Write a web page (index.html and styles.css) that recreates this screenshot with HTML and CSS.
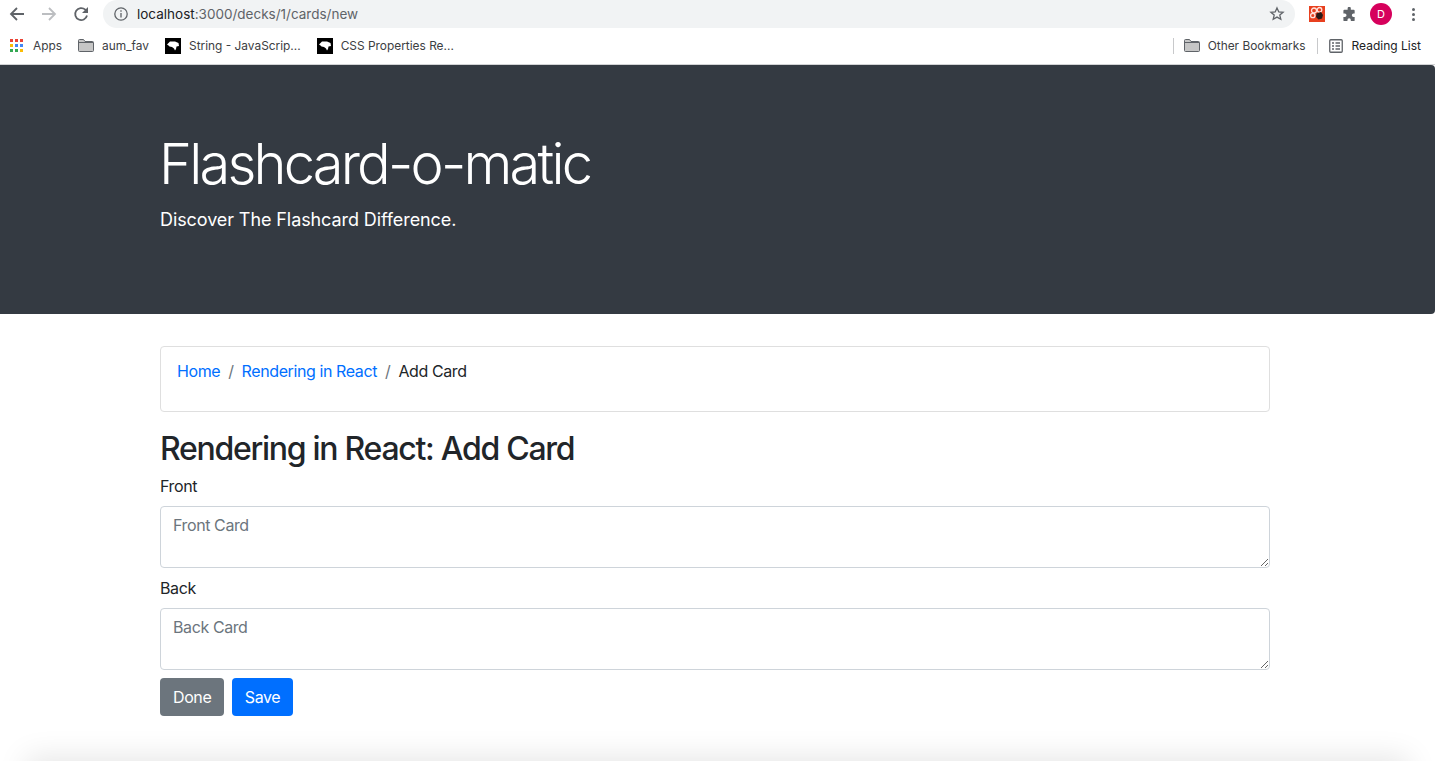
FILE: index.html
```html
<!DOCTYPE html>
<html lang="en">
<head>
<meta charset="utf-8">
<title>Flashcard-o-matic</title>
<link rel="stylesheet" href="styles.css">
</head>
<body>
<header class="chrome">
  <div class="toolbar">
    <svg class="nav-icon first" viewBox="0 0 16 16"><path d="M15 8H2M8 2 2 8l6 6" class="stroke-dark"/></svg>
    <svg class="nav-icon" viewBox="0 0 16 16"><path d="M1 8h13M8 2l6 6-6 6" class="stroke-light"/></svg>
    <svg class="nav-icon" viewBox="0 0 16 16"><path d="M14 9.500A6 6 0 1 1 12.300 3.700L14 5.500" class="stroke-dark"/><path d="M15 1v6H9z" class="fill-dark"/></svg>
    <div class="omnibox">
      <svg class="info" viewBox="0 0 14 14"><circle cx="7" cy="7" r="6.200" class="stroke-thin"/><path d="M7 6v4.500M7 3.300v1.500" class="stroke-thin"/></svg>
      <span class="url"><span class="host">localhost</span>:3000/decks/1/cards/new</span>
      <svg class="star" viewBox="0 0 16 16"><path d="m8 1.900 1.800 4 4.300.4-3.300 2.800 1 4.200L8 11.100l-3.800 2.200 1-4.200-3.300-2.800 4.300-.4z" class="stroke-thin"/></svg>
    </div>
    <svg class="ext" viewBox="0 0 16 16"><rect width="16" height="16" fill="#e8401f"/><g fill="none" stroke="#ffe3dc" stroke-width="1.300"><circle cx="5" cy="4.500" r="2.500"/><circle cx="10.500" cy="3.800" r="2.300"/><circle cx="3.800" cy="9.500" r="2.200"/><path d="M7.500 4.500h1M5 7v1"/></g><path d="M7.500 7.500 12 6l2 3-1 3.500-3.500 1-2.500-2.500z" fill="#2a1a16"/></svg>
    <svg class="puzzle" viewBox="0 0 16 16"><path d="M6 1.500a1.700 1.700 0 0 1 3.400 0V3h3.100a1 1 0 0 1 1 1v3h-1.200a1.800 1.800 0 0 0 0 3.600h1.200V14a1 1 0 0 1-1 1H9.400v-1.200a1.800 1.800 0 0 0-3.600 0V15H2.500a1 1 0 0 1-1-1v-3.400H3a1.800 1.800 0 0 0 0-3.600H1.500V4a1 1 0 0 1 1-1H6z" fill="#5f6368"/></svg>
    <span class="avatar">D</span>
    <span class="kebab"><i></i><i></i><i></i></span>
  </div>
  <nav class="bookmarks">
    <svg class="apps" viewBox="0 0 13 13"><g fill="#ea4335"><rect width="3" height="3"/><rect x="5" width="3" height="3"/><rect x="10" width="3" height="3"/></g><g fill="#4285f4"><rect y="5" width="3" height="3" fill="#fbbc04"/><rect x="5" y="5" width="3" height="3"/><rect x="10" y="5" width="3" height="3"/></g><g fill="#34a853"><rect y="10" width="3" height="3"/><rect x="5" y="10" width="3" height="3"/><rect x="10" y="10" width="3" height="3" fill="#fbbc04"/></g></svg>
    <span class="bm apps-label">Apps</span>
    <svg class="folder" viewBox="0 0 16 13"><path d="M.5 1.500a1 1 0 0 1 1-1h4L7 2.500h7.500a1 1 0 0 1 1 1v8a1 1 0 0 1-1 1h-13a1 1 0 0 1-1-1z" fill="#c6c6c6" stroke="#5f6368"/><path d="M1 3.500h14" stroke="#5f6368" fill="none"/></svg>
    <span class="bm aum">aum_fav</span>
    <svg class="mdn" viewBox="0 0 16 16"><rect width="16" height="16"/><path d="M2 6.500 5 3.500h5l3.500 1.500L14 8l-2.500.5L11 11l-1 1.500-1-2-2-1.500-2.500-.5-1-1z" fill="#fff"/></svg>
    <span class="bm string">String - JavaScrip...</span>
    <svg class="mdn" viewBox="0 0 16 16"><rect width="16" height="16"/><path d="M2 6.500 5 3.500h5l3.500 1.500L14 8l-2.500.5L11 11l-1 1.500-1-2-2-1.500-2.500-.5-1-1z" fill="#fff"/></svg>
    <span class="bm">CSS Properties Re...</span>
    <span class="bm-spacer"></span>
    <span class="sep"></span>
    <svg class="folder" viewBox="0 0 16 13"><path d="M.5 1.500a1 1 0 0 1 1-1h4L7 2.500h7.500a1 1 0 0 1 1 1v8a1 1 0 0 1-1 1h-13a1 1 0 0 1-1-1z" fill="#c6c6c6" stroke="#5f6368"/><path d="M1 3.500h14" stroke="#5f6368" fill="none"/></svg>
    <span class="bm other">Other Bookmarks</span>
    <span class="sep"></span>
    <svg class="reading" viewBox="0 0 14 14"><rect x=".75" y=".75" width="12.500" height="12.500" rx="1" class="stroke-thin"/><path d="M3 4h2M3 7h2M3 10h2M6.500 4H11M6.500 7H11M6.500 10H11" class="stroke-thin"/></svg>
    <span class="bm reading-label">Reading List</span>
  </nav>
</header>
<section class="jumbotron">
  <div class="container">
    <h1>Flashcard-o-matic</h1>
    <p>Discover The Flashcard Difference.</p>
  </div>
</section>
<main class="container">
  <ol class="breadcrumb">
    <li><a href="#">Home</a></li>
    <li class="slash">/</li>
    <li><a href="#">Rendering in React</a></li>
    <li class="slash">/</li>
    <li>Add Card</li>
  </ol>
  <h2>Rendering in React: Add Card</h2>
  <form>
    <label for="front">Front</label>
    <textarea id="front" placeholder="Front Card"></textarea>
    <label for="back">Back</label>
    <textarea id="back" placeholder="Back Card"></textarea>
    <div class="actions">
      <button type="button" class="btn secondary">Done</button>
      <button type="button" class="btn primary">Save</button>
    </div>
  </form>
</main>
<div class="shadow"></div>
</body>
</html>
```
FILE: styles.css
```css
* { box-sizing: border-box; }
html, body { height: 100%; }
body {
  margin: 0;
  height: 761px;
  overflow: hidden;
  position: relative;
  background: #fff;
  color: #212529;
  font-family: Inter, "Liberation Sans", sans-serif;
  font-size: 16px;
  line-height: 24px;
  letter-spacing: -.025em;
}
.chrome { height: 65px; background: #fff; border-bottom: 1px solid #d2d3d5; }
.toolbar { height: 28px; display: flex; align-items: center; }
.nav-icon { width: 16px; height: 16px; margin-right: 16px; flex: none; }
.nav-icon.first { margin-left: 9px; }
.stroke-dark { fill: none; stroke: #5f6368; stroke-width: 1.800; }
.stroke-light { fill: none; stroke: #bcbec1; stroke-width: 1.800; }
.fill-dark { fill: #5f6368; }
.stroke-thin { fill: none; stroke: #5f6368; stroke-width: 1.300; }
.omnibox {
  width: 1192px;
  height: 28px;
  margin-left: -2px;
  flex: none;
  display: flex;
  align-items: center;
  padding: 0 10px 0 11px;
  background: #f1f3f4;
  border-radius: 14px;
}
.info { width: 14px; height: 14px; flex: none; }
.url { margin-left: 9px; font-size: 13.500px; line-height: 28px; letter-spacing: 0; color: #5f6368; flex: 1; }
.host { color: #202124; }
.star { width: 16px; height: 16px; flex: none; }
.ext { width: 16px; height: 16px; flex: none; margin-left: 14px; }
.puzzle { width: 15px; height: 15px; flex: none; margin-left: 17px; }
.avatar {
  width: 22px; height: 22px; flex: none; margin-left: 13px;
  border-radius: 50%;
  background: #d6005c; color: #fff;
  font-size: 11px; line-height: 22px; text-align: center;
  letter-spacing: 0;
}
.kebab { display: flex; flex-direction: column; gap: 2px; margin-left: 20px; flex: none; }
.kebab i { width: 3px; height: 3px; border-radius: 50%; background: #5f6368; display: block; }
.bookmarks {
  height: 36px;
  display: flex;
  align-items: center;
  padding: 0 14px 1px 10px;
}
.bm { font-size: 11.900px; line-height: 16px; letter-spacing: 0; color: #3c4043; white-space: nowrap; }
.apps { width: 13px; height: 13px; flex: none; }
.apps-label { margin-left: 10px; }
.folder { width: 16px; height: 13px; flex: none; margin-left: 16px; }
.aum { margin-left: 8px; }
.mdn { width: 16px; height: 16px; flex: none; margin-left: 16px; margin-right: 8px; }
.bm-spacer { flex: 1; }
.sep { width: 1px; height: 16px; background: #c8c9cb; flex: none; }
.other { margin-left: 8px; margin-right: 11px; }
.bookmarks .sep + .folder { margin-left: 10px; }
.reading { width: 14px; height: 14px; flex: none; margin-left: 11px; }
.reading-label { margin-left: 9px; color: #202124; font-size: 12px; }
.container { width: 1110px; margin-left: 160px; }
.jumbotron {
  height: 249px;
  background: #343a42;
  color: #fff;
  padding-top: 66px;
  border-radius: 0 4px 4px 0;
}
.jumbotron h1 { margin: 0 0 8px -1px; font-size: 56px; font-weight: 300; line-height: 67.200px; letter-spacing: -.05em; }
.jumbotron p { margin: 0; font-size: 18px; font-weight: 400; line-height: 27px; letter-spacing: -.005em; }
.breadcrumb {
  list-style: none;
  height: 66px;
  margin: 32px 0 18px;
  padding: 12px 16px;
  display: flex;
  border: 1px solid #dfdfdf;
  border-radius: 4px;
  gap: 8px;
}
.breadcrumb a { color: #006fff; text-decoration: none; }
.slash { color: #6c757d; }
h2 { margin: 0 0 6px; font-size: 32px; font-weight: 500; line-height: 38.400px; letter-spacing: -.04em; }
form { display: block; }
label { display: block; margin-bottom: 8px; }
textarea {
  display: block;
  width: 100%;
  height: 62px;
  margin-bottom: 8px;
  padding: 6px 12px;
  border: 1px solid #ced4da;
  border-radius: 4px;
  font: inherit;
  letter-spacing: inherit;
  color: #495057;
  background: #fff;
  outline: none;
}
textarea::placeholder { color: #6c757d; opacity: 1; }
.actions { display: flex; gap: 8px; }
.btn {
  height: 38px;
  padding: 6px 12px;
  font: inherit;
  letter-spacing: inherit;
  color: #fff;
  border: 1px solid transparent;
  border-radius: 4px;
}
.secondary { background: #6c757d; }
.primary { background: #006fff; padding: 6px 11.500px; }
.shadow {
  position: absolute;
  left: 30px;
  right: 30px;
  bottom: -30px;
  height: 30px;
  box-shadow: 0 0 30px 4px rgba(0,0,0,.1);
}
```
